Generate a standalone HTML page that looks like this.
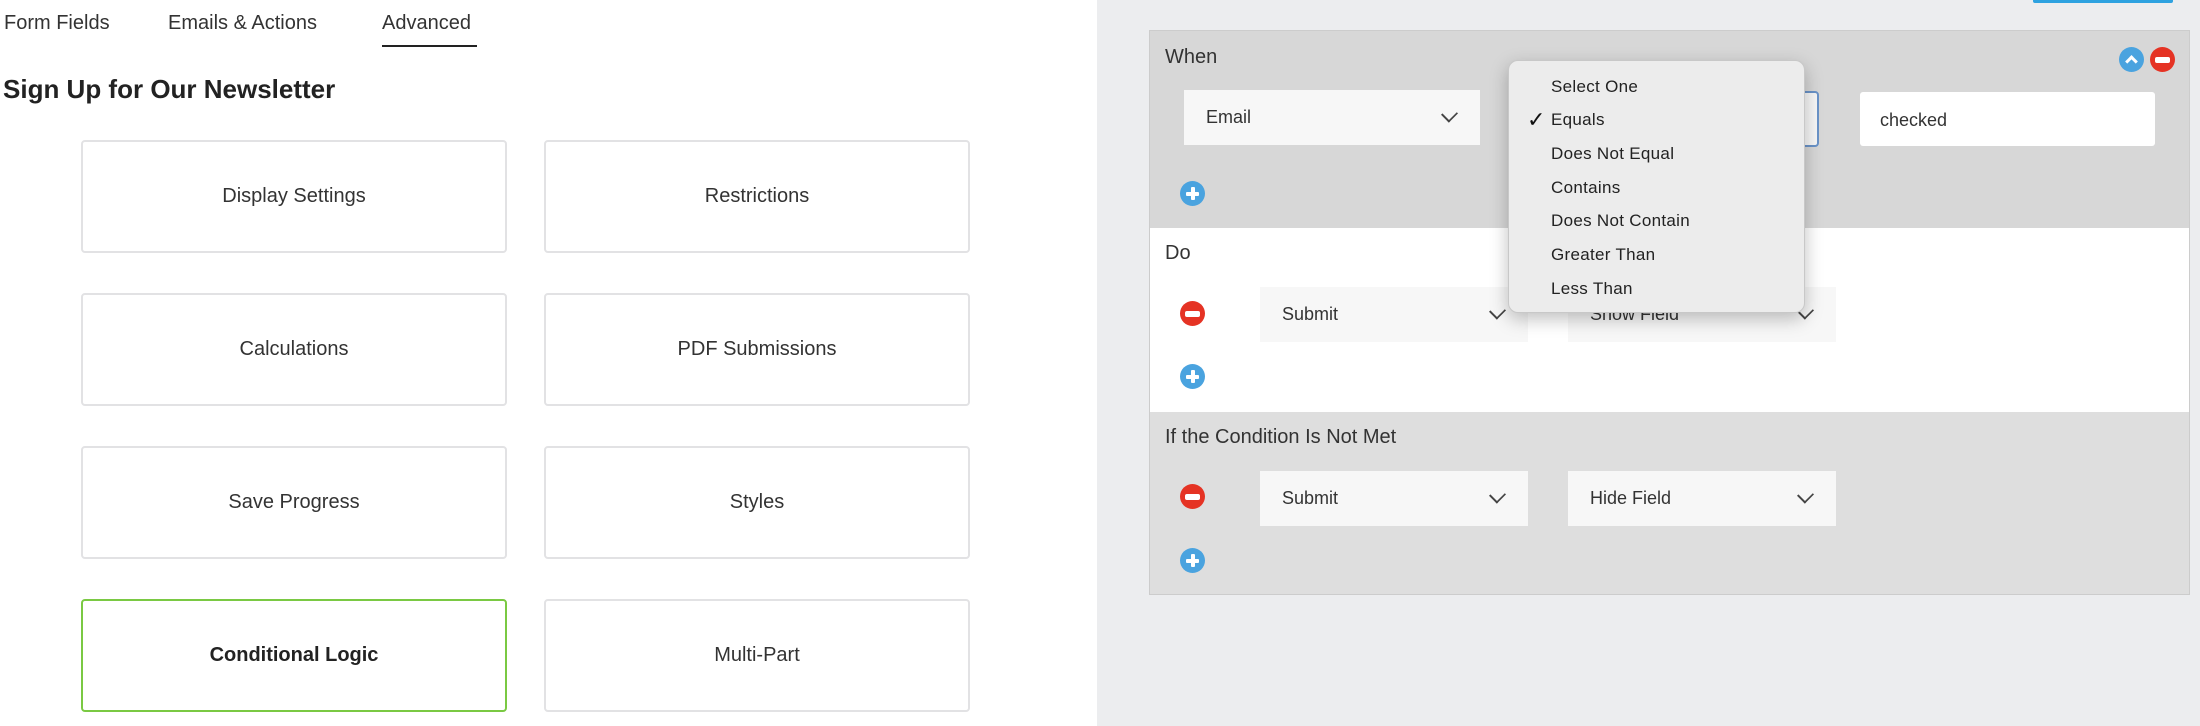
<!DOCTYPE html>
<html><head><meta charset="utf-8"><style>
*{box-sizing:border-box;margin:0;padding:0}
body{width:2200px;height:726px;overflow:hidden;font-family:"Liberation Sans",sans-serif;color:#222;background:#ecedef;position:relative}
.abs{position:absolute}
#left{left:0;top:0;width:1097px;height:726px;background:#fff}
.tab{position:absolute;top:12px;font-size:20px;color:#333}
.card{position:absolute;width:426px;height:113px;border:2px solid #e2e2e4;border-radius:4px;display:flex;align-items:center;justify-content:center;font-size:20px;color:#333;background:#fff}
.sel{position:absolute;background:#f7f7f7;font-size:18px;color:#333;display:flex;align-items:center;padding-left:22px}
.chev{position:absolute;right:24px;top:50%;width:13px;height:13px;border-right:2px solid #444;border-bottom:2px solid #444;transform:translateY(-80%) rotate(45deg) scaleX(.85)}
.lbl{position:absolute;left:1165px;font-size:20px;color:#333}
.ic{position:absolute;width:25px;height:25px;border-radius:50%}
.plus{background:#4aa3df}
.plus:before,.plus:after{content:"";position:absolute;background:#fff;border-radius:1px}
.plus:before{left:6px;top:10.5px;width:13px;height:4px}
.plus:after{left:10.5px;top:6px;width:4px;height:13px}
.minus{background:#e53324}
.minus:before{content:"";position:absolute;left:5px;top:9.5px;width:15px;height:6px;background:#fff;border-radius:2px}
.dd{left:1508px;top:60px;width:297px;height:253px;background:#ececec;border-radius:10px;border:1px solid #c8c8c8;box-shadow:0 6px 18px rgba(0,0,0,.25)}
.it{position:absolute;left:42px;font-size:17px;letter-spacing:.3px;color:#222}
</style></head><body>
<div id="left" class="abs">
<div class="tab" style="left:4px">Form Fields</div>
<div class="tab" style="left:168px">Emails &amp; Actions</div>
<div class="tab" style="left:382px">Advanced</div>
<div class="abs" style="left:382px;top:45px;width:95px;height:2px;background:#222"></div>
<div class="abs" style="left:3px;top:74px;font-size:26px;font-weight:bold;color:#222">Sign Up for Our Newsletter</div>
<div class="card" style="left:81px;top:140px">Display Settings</div>
<div class="card" style="left:544px;top:140px">Restrictions</div>
<div class="card" style="left:81px;top:293px">Calculations</div>
<div class="card" style="left:544px;top:293px">PDF Submissions</div>
<div class="card" style="left:81px;top:446px">Save Progress</div>
<div class="card" style="left:544px;top:446px">Styles</div>
<div class="card" style="left:81px;top:599px;border-color:#7ac943;font-weight:bold;color:#222">Conditional Logic</div>
<div class="card" style="left:544px;top:599px">Multi-Part</div>
</div>
<div class="abs" style="left:2033px;top:0;width:140px;height:3px;background:#2ea2e0;border-radius:0 0 2px 2px"></div>
<div class="abs" style="left:1149px;top:30px;width:1041px;height:565px;border:1px solid #ccc;background:#ddd"></div>
<div class="abs" style="left:1150px;top:31px;width:1039px;height:197px;background:#d7d7d7"></div>
<div class="abs" style="left:1150px;top:228px;width:1039px;height:184px;background:#fff"></div>
<div class="abs" style="left:1150px;top:412px;width:1039px;height:182px;background:#dedede"></div>
<div class="lbl" style="top:46px">When</div>
<div class="lbl" style="top:242px">Do</div>
<div class="lbl" style="top:426px">If the Condition Is Not Met</div>
<div class="ic" style="left:2119px;top:47px;background:#4aa3df"><div class="abs" style="left:8px;top:10px;width:9px;height:9px;border-left:3px solid #fff;border-top:3px solid #fff;transform:rotate(45deg)"></div></div>
<div class="ic minus" style="left:2150px;top:47px"></div>
<div class="sel" style="left:1184px;top:90px;width:296px;height:55px">Email<span class="chev"></span></div>
<div class="abs" style="left:1530px;top:91px;width:289px;height:56px;border:2px solid #6a93c8;border-radius:4px;background:#f7f7f7"></div>
<div class="abs" style="left:1860px;top:92px;width:295px;height:54px;background:#fff;border-radius:3px;font-size:18px;color:#333;padding:18px 0 0 20px">checked</div>
<div class="ic plus" style="left:1180px;top:181px"></div>
<div class="ic minus" style="left:1180px;top:301px"></div>
<div class="sel" style="left:1260px;top:287px;width:268px;height:55px">Submit<span class="chev"></span></div>
<div class="sel" style="left:1568px;top:287px;width:268px;height:55px">Show Field<span class="chev"></span></div>
<div class="ic plus" style="left:1180px;top:364px"></div>
<div class="ic minus" style="left:1180px;top:484px"></div>
<div class="sel" style="left:1260px;top:471px;width:268px;height:55px">Submit<span class="chev"></span></div>
<div class="sel" style="left:1568px;top:471px;width:268px;height:55px">Hide Field<span class="chev"></span></div>
<div class="ic plus" style="left:1180px;top:548px"></div>
<div class="abs dd">
<div class="it" style="top:16px">Select One</div>
<div class="abs" style="left:18px;top:46px;font-size:22px;color:#111">✓</div>
<div class="it" style="top:49px">Equals</div>
<div class="it" style="top:83px">Does Not Equal</div>
<div class="it" style="top:117px">Contains</div>
<div class="it" style="top:150px">Does Not Contain</div>
<div class="it" style="top:184px">Greater Than</div>
<div class="it" style="top:218px">Less Than</div>
</div>
</body></html>
